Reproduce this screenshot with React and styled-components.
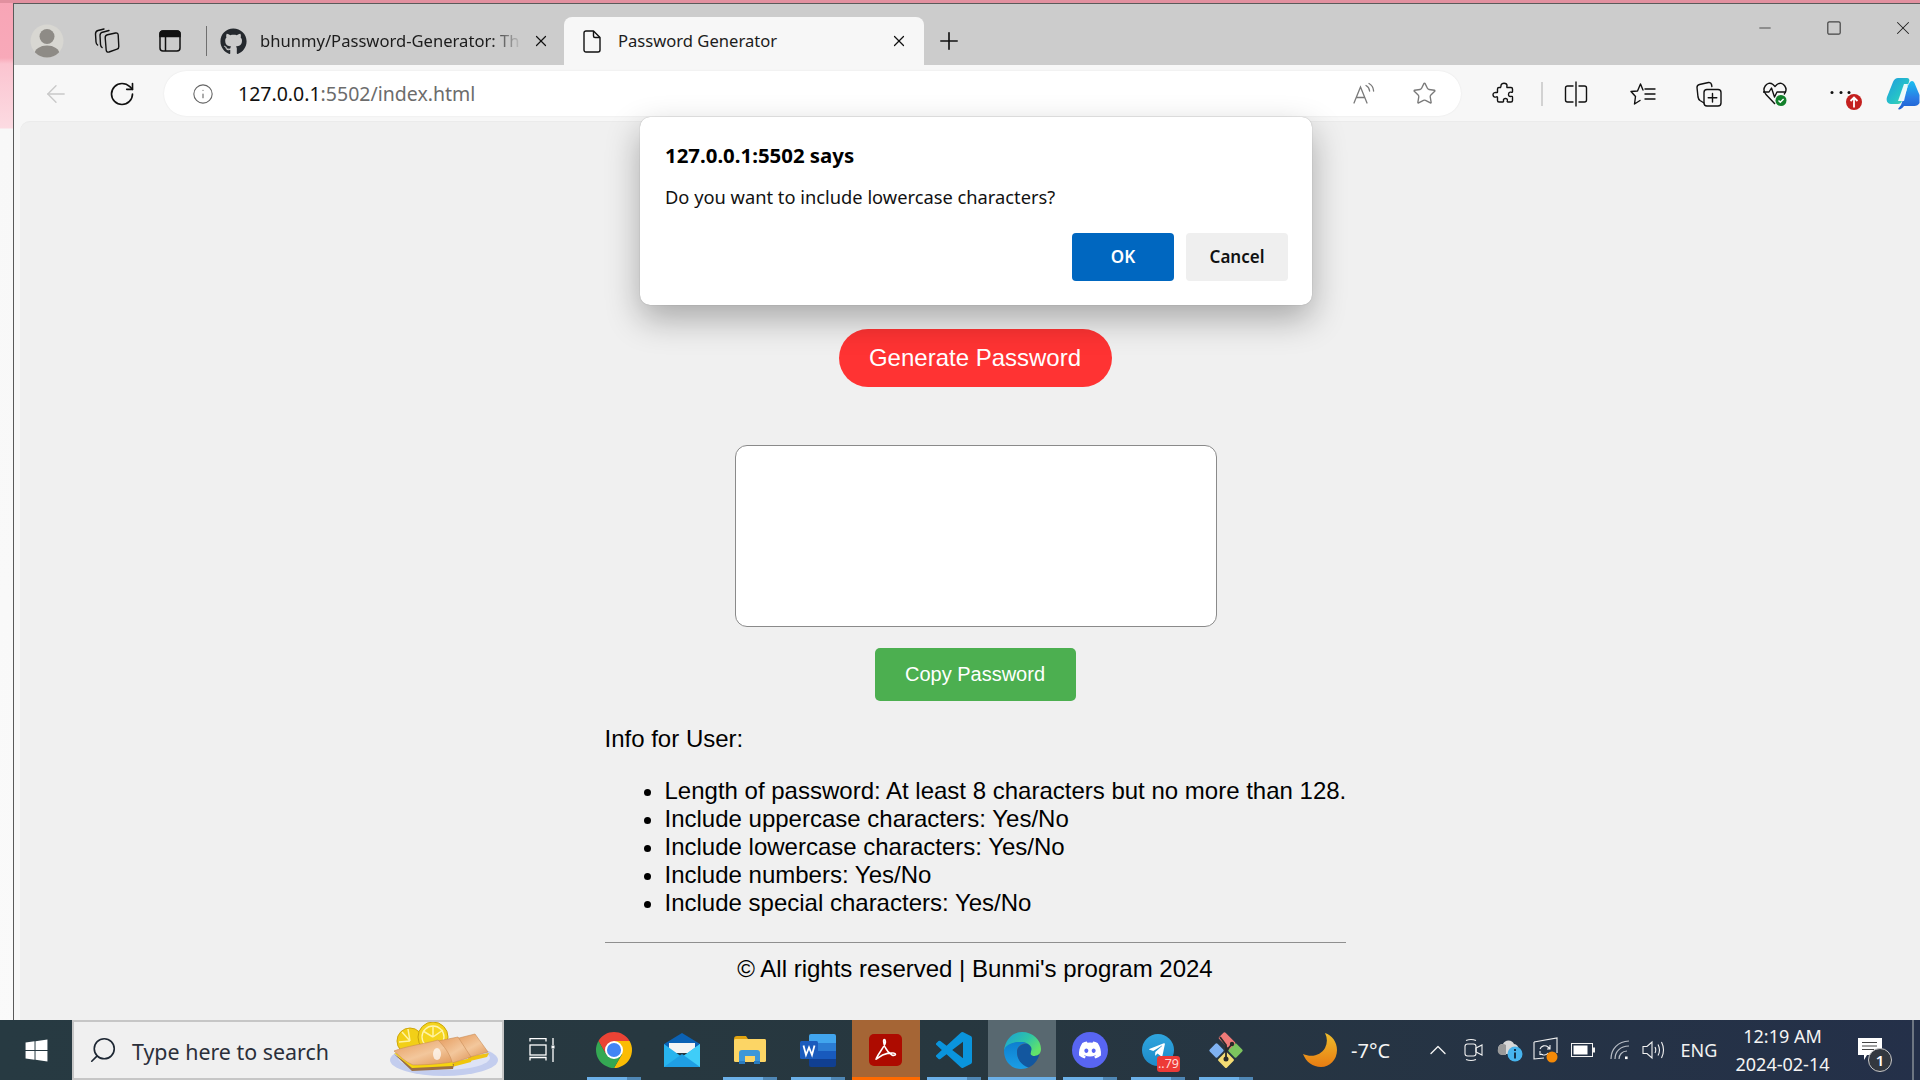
import React from 'react';
import styled, { createGlobalStyle } from 'styled-components';
import { ArrowLeft, RotateCw, Info, Star, X, Plus, Minus, ChevronUp, Search } from 'lucide-react';
import { FaGithub, FaDiscord, FaTelegramPlane, FaWindows } from 'react-icons/fa';

const UI_FONT = `"Noto Sans", "Open Sans", sans-serif`;

const GlobalStyle = createGlobalStyle`
  html, body {
    margin: 0;
    padding: 0;
    width: 1920px;
    height: 1080px;
    overflow: hidden;
  }
  * { box-sizing: border-box; }
`;

const Desktop = styled.div`
  position: relative;
  width: 1920px;
  height: 1080px;
  overflow: hidden;
  display: flex;
  flex-direction: column;
  padding-top: 3px;
  background:
    linear-gradient(to bottom, #e1909f 0, #e1909f 3px, transparent 3px),
    linear-gradient(to bottom, #f8a5b6 0, #f8a9b9 58px, #fbc4d0 64px, #fcdbe2 128px, #f8f8f8 129px, #fafafa 100%);
`;

const BrowserWindow = styled.div`
  flex: 1;
  min-height: 0;
  margin-left: 13px;
  border-left: 1px solid #5a5a5a;
  border-top: 1px solid #5a5a5a;
  display: flex;
  flex-direction: column;
  overflow: hidden;
`;

const TabStrip = styled.div`
  height: 61px;
  flex: none;
  background: #cccccc;
  padding-top: 13px;
  display: flex;
  align-items: stretch;
`;

const Slot = styled.div`
  width: ${(p) => p.$w}px;
  flex: none;
  display: flex;
  align-items: center;
  justify-content: center;
  margin-left: ${(p) => p.$ml || 0}px;
  color: ${(p) => p.$color || '#111'};
  position: relative;
`;

const TabDivider = styled.div`
  width: 1px;
  height: 30px;
  margin-top: 9px;
  background: #6f6f6f;
  flex: none;
`;

const InactiveTab = styled.div`
  width: 357px;
  flex: none;
  display: flex;
  align-items: center;
  padding-left: 13px;
  color: #222;
`;

const TabTitle = styled.div`
  font-family: ${UI_FONT};
  font-size: 16.6px;
  color: #1c1c1c;
  white-space: nowrap;
  margin-left: ${(p) => p.$ml}px;
  margin-bottom: 2px;
  width: ${(p) => p.$w}px;
  flex: none;
  ${(p) => p.$fade && `
    -webkit-mask-image: linear-gradient(to right, #000 88%, transparent 100%);
    mask-image: linear-gradient(to right, #000 88%, transparent 100%);
  `}
`;

const ActiveTab = styled.div`
  width: 360px;
  flex: none;
  display: flex;
  align-items: center;
  padding-left: 19px;
  background: #f7f7f7;
  border-radius: 8px 8px 0 0;
`;

const TabClose = styled.div`
  margin-left: ${(p) => p.$ml}px;
  display: flex;
  color: #111;
`;

const WindowControls = styled.div`
  margin-left: auto;
  display: flex;
  gap: 35px;
  padding-bottom: 26px;
`;

const Toolbar = styled.div`
  height: 56px;
  flex: none;
  background: #f7f7f7;
  display: flex;
  align-items: center;
  padding-top: 1px;
`;

const AddressBar = styled.div`
  width: 1297px;
  height: 45px;
  margin-left: 18px;
  flex: none;
  background: #fff;
  border-radius: 23px;
  display: flex;
  align-items: center;
  padding: 0 24px 0 28px;
  box-shadow: 0 0 2px rgba(0, 0, 0, 0.08);
`;

const UrlText = styled.div`
  font-family: ${UI_FONT};
  font-size: 19.5px;
  margin-left: 24px;
  margin-bottom: 1px;
  color: #6c6c6c;
  white-space: nowrap;
`;

const UrlHost = styled.span`
  color: #111;
`;

const AddressActions = styled.div`
  margin-left: auto;
  display: flex;
  align-items: center;
  gap: 36px;
  color: #7a7a7a;
`;

const ToolbarDivider = styled.div`
  width: 2px;
  height: 24px;
  margin-left: 13px;
  background: #d2d2d2;
  flex: none;
`;

const ToolbarGroup = styled.div`
  display: flex;
  align-items: center;
  margin-left: 19px;
`;

const Frame = styled.div`
  flex: 1;
  min-height: 0;
  background: #f7f7f7;
  padding-left: 6px;
`;

const Page = styled.main`
  height: 100%;
  background: #f0f0f0;
  border-radius: 10px 0 0 0;
  box-shadow: inset 0 1px 0 #ebebeb;
  padding: 208px 0 0 10px;
  display: flex;
  flex-direction: column;
  align-items: center;
  font-family: "Liberation Sans", Arial, sans-serif;
  color: #000;
`;

const GenerateButton = styled.button`
  width: 273px;
  height: 58px;
  border: 0;
  border-radius: 29px;
  background: #ff3333;
  color: #fff;
  font: 24px "Liberation Sans", Arial, sans-serif;
  flex: none;
`;

const PasswordBox = styled.div`
  width: 482px;
  height: 182px;
  margin: 58px 0 0 1px;
  background: #fff;
  border: 1px solid #8a8a8a;
  border-radius: 12px;
  flex: none;
`;

const CopyButton = styled.button`
  width: 201px;
  height: 53px;
  margin-top: 21px;
  border: 0;
  border-radius: 5px;
  background: #4caf50;
  color: #fff;
  font: 20px "Liberation Sans", Arial, sans-serif;
  flex: none;
`;

const InfoBlock = styled.section`
  width: 741px;
  margin-top: 24px;
  font-size: 24px;
  line-height: 28px;
`;

const InfoTitle = styled.div`
  margin-bottom: 24px;
`;

const InfoList = styled.ul`
  margin: 0;
  padding-left: 60px;

  li {
    white-space: nowrap;
  }
`;

const Rule = styled.hr`
  margin: 25px 0 12px;
  border: 0;
  border-top: 1px solid #8f8f8f;
  height: 1px;
`;

const Footer = styled.div`
  text-align: center;
`;

const Dialog = styled.div`
  position: absolute;
  left: 640px;
  top: 117px;
  width: 672px;
  height: 188px;
  background: #fff;
  border-radius: 10px;
  box-shadow: 0 0 1px rgba(0, 0, 0, 0.35), 0 14px 34px rgba(0, 0, 0, 0.3);
  padding: 25px 24px 24px 25px;
  display: flex;
  flex-direction: column;
  font-family: ${UI_FONT};
  color: #111;
`;

const DialogTitle = styled.div`
  font-size: 20.4px;
  font-weight: 700;
  line-height: 26px;
  color: #000;
`;

const DialogMessage = styled.div`
  font-size: 18.3px;
  line-height: 26px;
  margin-top: 16px;
`;

const DialogButtons = styled.div`
  margin-top: auto;
  display: flex;
  justify-content: flex-end;
  gap: 12px;
`;

const DialogButton = styled.button`
  width: 102px;
  height: 48px;
  border: 0;
  border-radius: 4px;
  padding: 0 0 2px;
  background: ${(p) => (p.$primary ? '#0067c0' : '#efefef')};
  color: ${(p) => (p.$primary ? '#fff' : '#111')};
  font: 600 17px ${UI_FONT};
`;

const Taskbar = styled.footer`
  height: 60px;
  flex: none;
  display: flex;
  align-items: stretch;
  background: linear-gradient(90deg, #273a42 0%, #27373f 50%, #243049 100%);
  color: #fff;
  font-family: ${UI_FONT};
  position: relative;
`;

const StartButton = styled.div`
  width: 72px;
  flex: none;
  display: flex;
  align-items: center;
  justify-content: center;
  color: #fff;
`;

const SearchBox = styled.div`
  width: 432px;
  flex: none;
  background: #f0f0f0;
  border: 2px solid #c6c6c6;
  display: flex;
  align-items: center;
  padding-left: 14px;
  color: #1d2733;
`;

const SearchGlass = styled(Search)`
  transform: scaleX(-1);
  flex: none;
`;

const SearchText = styled.div`
  margin: 3px 0 0 14px;
  font-size: 21.4px;
  color: #2b2f3a;
  white-space: nowrap;
`;

const SearchArt = styled.svg`
  margin-left: auto;
  margin-right: 2px;
  flex: none;
`;

const TaskItem = styled.div`
  width: ${(p) => p.$w || 68}px;
  flex: none;
  position: relative;
  display: flex;
  align-items: center;
  justify-content: center;
  background: ${(p) => (p.$active ? '#a56535' : p.$hover ? '#586870' : 'transparent')};
`;

const RunningBar = styled.div`
  position: absolute;
  left: ${(p) => (p.$full ? 0 : 7)}px;
  right: ${(p) => (p.$full ? 0 : 7)}px;
  bottom: 0;
  height: 3px;
  background: ${(p) => (p.$orange ? '#ff6a00' : p.$full ? '#6bb0e8' : 'linear-gradient(90deg, #6bb0e8 75%, #4f87b5 75%)')};
`;

const CountBadge = styled.div`
  position: absolute;
  left: 33px;
  top: 36px;
  width: 23px;
  height: 16px;
  border-radius: 3px;
  background: #ed3a36;
  color: #ffd9d6;
  font-size: 12.5px;
  line-height: 16px;
  text-align: center;
`;

const Weather = styled.div`
  margin-left: 43px;
  width: 117px;
  flex: none;
  display: flex;
  align-items: center;
`;

const Temperature = styled.div`
  margin-left: 14px;
  font-size: 20px;
  white-space: nowrap;
  color: #f4f4f4;
`;

const TrayItem = styled.div`
  width: ${(p) => p.$w}px;
  flex: none;
  display: flex;
  align-items: center;
  justify-content: center;
  color: #f2f2f2;
  font-size: 18px;
  position: relative;
`;

const Clock = styled.div`
  width: 111px;
  flex: none;
  display: flex;
  flex-direction: column;
  align-items: center;
  justify-content: center;
  font-size: 18px;
  line-height: 28px;
  color: #f4f4f4;
  white-space: nowrap;
`;

const NoticeCount = styled.div`
  position: absolute;
  left: 30px;
  top: 28px;
  width: 24px;
  height: 24px;
  border-radius: 50%;
  background: #33383f;
  border: 1px solid #c8c8c8;
  color: #fff;
  font-size: 15px;
  font-weight: 600;
  line-height: 22px;
  text-align: center;
`;

const ShowDesktopLine = styled.div`
  width: 2px;
  margin-left: 10px;
  flex: none;
  background: #6d7682;
`;

const Avatar = () => (
  <svg width="34" height="34" viewBox="0 0 34 34">
    <defs>
      <clipPath id="avatar-clip"><circle cx="17" cy="17" r="16.5" /></clipPath>
    </defs>
    <circle cx="17" cy="17" r="16.5" fill="#d8d7d2" />
    <g clipPath="url(#avatar-clip)" fill="#8e8b86">
      <circle cx="17" cy="12.5" r="7.5" />
      <ellipse cx="17" cy="30" rx="12.5" ry="8.5" />
    </g>
  </svg>
);

const CollectionsIcon = () => (
  <svg width="26" height="26" viewBox="0 0 26 26" fill="none" stroke="#111" strokeWidth="1.4" strokeLinecap="round" strokeLinejoin="round">
    <path d="M10 1 4 2.500Q1.500 3.300 1.500 6l.5 8q.2 2 1.600 3" />
    <path d="M15 2.500 8.500 4.200Q6 5 6 7.500l.5 9q.2 2 1.600 3" />
    <path d="M13.500 6.800 21.500 5q2.500-.4 2.700 2l.6 11.500q.1 2-1.700 2.600L15 24q-2.500.6-2.800-1.800l-1-12.500q-.1-2.300 2.300-2.900z" />
  </svg>
);

const VerticalTabsIcon = () => (
  <svg width="22" height="22" viewBox="0 0 22 22" fill="none" stroke="#111" strokeWidth="1.5">
    <rect x="1" y="1" width="20" height="20" rx="3" />
    <path d="M1 4a3 3 0 0 1 3-3h14a3 3 0 0 1 3 3v2.5H1z" fill="#111" />
    <path d="M6.5 6.5V21" />
  </svg>
);

const PageIcon = () => (
  <svg width="18" height="23" viewBox="0 0 18 23" fill="none" stroke="#111" strokeWidth="1.4" strokeLinejoin="round">
    <path d="M3 1h7.5L17 7.5V20a2 2 0 0 1-2 2H3a2 2 0 0 1-2-2V3a2 2 0 0 1 2-2z" />
    <path d="M10.5 1v5a1.5 1.5 0 0 0 1.5 1.5h5" />
  </svg>
);

const MaximizeIcon = () => (
  <svg width="14" height="14" viewBox="0 0 14 14" fill="none" stroke="#444" strokeWidth="1.2">
    <rect x="0.8" y="0.8" width="12.4" height="12.4" rx="1.5" />
  </svg>
);

const ReadAloudIcon = () => (
  <svg width="24" height="24" viewBox="0 0 24 24" fill="none" stroke="#7a7a7a" strokeWidth="1.3" strokeLinecap="round">
    <path d="M2 21 8.5 5 15 21M4.5 15.5h8" />
    <path d="M14 3.5c2 1 3.3 3 3.6 5.5M17 1.5c2.7 1.4 4.4 4.2 4.6 7.5" />
  </svg>
);

const ExtensionIcon = () => (
  <svg width="24" height="24" viewBox="0 0 24 24" fill="none" stroke="#111" strokeWidth="1.4" strokeLinejoin="round">
    <path d="M9 3.500C9 .500 15 .500 15 3.500c0 1-.500 1.500 0 2h4c1 0 1.500.500 1.500 1.500v2.500c0 .800-.700 1-1.500.700-2.800-1-3.800 5 0 4.200.800-.200 1.500 0 1.500.800v3.300c0 1-.600 1.500-1.500 1.500h-3c-.800 0-1-.700-.700-1.300 1-2.700-4.600-3.200-3.800 0 .200.800 0 1.300-.800 1.300H7c-1 0-1.500-.600-1.500-1.500v-3c0-.600-.500-.900-1-.600-3.800 1.300-5-4.200-1-4.500.700 0 2 .600 2-.500V7c0-1 .500-1.500 1.500-1.500h1.500c.500-.500.500-1 .500-2z" />
  </svg>
);

const SplitIcon = () => (
  <svg width="24" height="26" viewBox="0 0 24 26" fill="none" stroke="#111" strokeWidth="1.4" strokeLinecap="round">
    <path d="M9 5H3.500A2 2 0 0 0 1.500 7v12a2 2 0 0 0 2 2H9" />
    <path d="M15 5h5.500a2 2 0 0 1 2 2v12a2 2 0 0 1-2 2H15" />
    <path d="M12 1v24" />
  </svg>
);

const FavoritesIcon = () => (
  <svg width="26" height="24" viewBox="0 0 26 24" fill="none" stroke="#111" strokeWidth="1.4" strokeLinecap="round" strokeLinejoin="round">
    <path d="M13 8 10.500 2 7.500 9 1 9.500l4.500 5-1 7.500 5.500-3.500" />
    <path d="M15 7h10M15 12h10M15 17h10" />
  </svg>
);

const AddCollectionIcon = () => (
  <svg width="26" height="26" viewBox="0 0 26 26" fill="none" stroke="#111" strokeWidth="1.4" strokeLinecap="round" strokeLinejoin="round">
    <path d="M8 22 4 19.500Q2.500 18.500 2 16L1 6.500Q1 4 3.500 3.500l9-2Q15 1.200 15.500 3.500l.4 2" />
    <rect x="8" y="8.500" width="17" height="16.500" rx="3" />
    <path d="M16.500 12.500v8.500M12.200 16.800h8.600" />
  </svg>
);

const HealthIcon = () => (
  <svg width="26" height="28" viewBox="0 0 26 28" fill="none">
    <path d="M13 24 4 14.500C-1 9 5 0 11 4.500L13 6.500l2-2C21 0 27 9 22 14.500" stroke="#111" strokeWidth="1.4" strokeLinejoin="round" />
    <path d="M1 12h6l2.500-4 3 9 2.500-5h9" stroke="#111" strokeWidth="1.4" strokeLinejoin="round" fill="none" />
    <circle cx="19" cy="20.500" r="5.500" fill="#12802b" />
    <path d="m16.500 20.500 1.800 1.800 3.300-3.300" stroke="#fff" strokeWidth="1.400" />
  </svg>
);

const MoreIcon = () => (
  <svg width="44" height="33" viewBox="0 0 44 33">
    <circle cx="14" cy="15.500" r="1.500" fill="#111" />
    <circle cx="23" cy="15.500" r="1.500" fill="#111" />
    <circle cx="31" cy="15.500" r="1.500" fill="#111" />
    <circle cx="36" cy="25" r="8" fill="#c4201f" />
    <path d="M36 30.500v-10M32.500 24l3.500-3.500 3.500 3.500" stroke="#fff" strokeWidth="1.800" fill="none" />
  </svg>
);

const CopilotIcon = () => (
  <svg width="34" height="34" viewBox="0 0 34 34">
    <defs>
      <linearGradient id="copilot-a" x1="0" y1="0" x2="1" y2="1">
        <stop offset="0" stopColor="#1e9be0" />
        <stop offset="0.6" stopColor="#27c4c7" />
        <stop offset="1" stopColor="#58d69a" />
      </linearGradient>
      <linearGradient id="copilot-b" x1="0" y1="0" x2="0" y2="1">
        <stop offset="0" stopColor="#19c0f0" />
        <stop offset="0.6" stopColor="#2b7ce6" />
        <stop offset="1" stopColor="#1f5fd0" />
      </linearGradient>
    </defs>
    <path d="M12 1h9c2 0 3 2 2 4l-7 19c-.8 2-2 3-4 3H5C1 27 0 23 1 20L7 5c1-2.500 3-4 5-4z" fill="url(#copilot-a)" />
    <path d="M24 5c2-2 3.500-1 4.500 1l5 12v8c-1 2-3 3-5 3H18c-2 3-5 4-6 3l3-4 6-16c.5-2 1.500-5 3-7z" fill="url(#copilot-b)" />
    <path d="M22 7h-4L12 24h6z" fill="#fff" opacity="0.9" />
  </svg>
);

const LemonPlateArt = () => (
  <SearchArt width="112" height="56" viewBox="0 0 112 56">
    <defs>
      <linearGradient id="bread" x1="0" y1="0" x2="0.8" y2="1">
        <stop offset="0" stopColor="#e59a5c" />
        <stop offset="0.6" stopColor="#f3c79c" />
        <stop offset="1" stopColor="#e3a067" />
      </linearGradient>
    </defs>
    <ellipse cx="56" cy="38" rx="54" ry="16" fill="#c3cdee" />
    <ellipse cx="56" cy="36" rx="46" ry="12" fill="#dde3f6" />
    <circle cx="22" cy="19" r="13" fill="#f2cf17" stroke="#cfa70c" />
    <path d="M22 19 14 10M22 19l-2-12M22 19 11 20" stroke="#fff3a0" strokeWidth="1.500" />
    <circle cx="45" cy="15" r="15" fill="#f4d41d" stroke="#c9a40c" />
    <circle cx="45" cy="15" r="11" fill="none" stroke="#fff5ad" strokeWidth="1.300" />
    <path d="M45 15V4M45 15 35 9M45 15l10-7" stroke="#fff3a0" strokeWidth="1.500" />
    <path d="M70 24 84 34 101 31 99 35 82 39z" fill="#f0c414" />
    <path d="M67 17 87 12 100 30 82 35z" fill="url(#bread)" stroke="#c98d58" strokeWidth="0.600" />
    <path d="M54 28 64 40 84 36 83 40 64 45z" fill="#efc60d" />
    <path d="M50 19 70 15 83 35 64 41z" fill="url(#bread)" stroke="#c98d58" strokeWidth="0.600" />
    <path d="M6 32 24 49l41-2 1-5-42 2z" fill="#9b7044" />
    <path d="M6 31 24 46l41-2-1-5z" fill="#f6d50e" />
    <path d="M6 29C18 24 36 22 50 18c6 6 12 14 14 22-12 2-28 3-39 3C17 40 12 34 6 29z" fill="url(#bread)" stroke="#c98d58" strokeWidth="0.600" />
    <ellipse cx="49" cy="32" rx="4" ry="6" fill="#fff" opacity="0.7" />
  </SearchArt>
);

const TaskViewIcon = () => (
  <svg width="26" height="24" viewBox="0 0 26 24" fill="none" stroke="#fff" strokeWidth="1.300">
    <path d="M1 4V1.200h16V4M1 23v-3h16v3" transform="translate(0 -0.500)" />
    <rect x="1" y="7" width="16" height="10" />
    <path d="M24 0v7M24 11v13" />
    <rect x="22.500" y="7.500" width="3" height="3" fill="#fff" stroke="none" />
  </svg>
);

const ChromeIcon = () => {
  const sector = 'M22.39 6A12 12 0 0 0 1.61 6L6.800 15 12 12V6z';
  return (
    <svg width="36" height="36" viewBox="0 0 24 24">
      <path d={sector} fill="#ea4335" />
      <path d={sector} fill="#fbbc04" transform="rotate(120 12 12)" />
      <path d={sector} fill="#34a853" transform="rotate(240 12 12)" />
      <circle cx="12" cy="12" r="6" fill="#fff" />
      <circle cx="12" cy="12" r="4.700" fill="#4285f4" />
    </svg>
  );
};

const MailIcon = () => (
  <svg width="36" height="34" viewBox="0 0 36 34">
    <path d="M0 11 18 0l18 11v4H0z" fill="#0b62b5" />
    <path d="M5 10h26v10H5z" fill="#f4f4f4" />
    <path d="M0 11 18 24 36 11v23H0z" fill="#28b4ee" />
    <path d="M36 11v23H24l-6-10z" fill="#3fcdf8" />
    <path d="M0 34 18 21l18 13z" fill="#1f9fe4" />
  </svg>
);

const FolderIcon = () => (
  <svg width="32" height="28" viewBox="0 0 32 28">
    <path d="M0 3q0-3 3-3h9l2 3h16q2 0 2 2v4H0z" fill="#e0a310" />
    <rect y="3" width="32" height="23" rx="1.500" fill="#fcd565" />
    <path d="M5 26v-9q0-3 3-3h15q3 0 3 3v9h-5v-6H11v6z" fill="#3d97d8" />
    <rect x="5" y="25" width="6" height="3" fill="#2a7cc0" />
    <rect x="20" y="25" width="6" height="3" fill="#2a7cc0" />
  </svg>
);

const WordIcon = () => (
  <svg width="36" height="33" viewBox="0 0 36 33">
    <path d="M9 2q0-2 2-2h23q2 0 2 2v7H9z" fill="#41a5ee" />
    <rect x="9" y="9" width="27" height="8" fill="#2b7cd3" />
    <rect x="9" y="17" width="27" height="8" fill="#185abd" />
    <path d="M9 25h27v6q0 2-2 2H11q-2 0-2-2z" fill="#103f91" />
    <rect y="7" width="18" height="18" rx="1.500" fill="#1a5bbd" />
    <path d="M3.500 11.500 6 21l3-7.500L12 21l2.500-9.500" fill="none" stroke="#fff" strokeWidth="1.800" />
  </svg>
);

const AcrobatIcon = () => (
  <svg width="34" height="32" viewBox="0 0 34 32">
    <rect width="33" height="32" rx="5" fill="#ad0b00" />
    <path d="M7 25c2-5 6-9 9-15 .8-2 .3-4.500-.6-4.500-1.200 0-1 3.500.6 7.500 2 4 4.500 6.500 7 8 1.500.8 3.500.3 3.500-.8 0-1.200-3.500-1.700-8-.8-4 .8-7 2.500-9 4.200-1.300 1-2.800 2-2.500 1.400z" fill="none" stroke="#fff" strokeWidth="1.600" strokeLinejoin="round" />
  </svg>
);

const VsCodeIcon = () => (
  <svg width="36" height="36" viewBox="0 0 24 24">
    <path
      fill="#0a94dc"
      d="M23.15 2.587 18.21.21a1.494 1.494 0 0 0-1.705.29l-9.46 8.63-4.12-3.128a.999.999 0 0 0-1.276.057L.327 7.261A1 1 0 0 0 .326 8.74L3.899 12 .326 15.26a1 1 0 0 0 .001 1.479L1.65 17.94a.999.999 0 0 0 1.276.057l4.12-3.128 9.46 8.63a1.492 1.492 0 0 0 1.704.29l4.942-2.377A1.500 1.500 0 0 0 24 20.060V3.939a1.500 1.500 0 0 0-.85-1.352zm-5.146 14.861L10.826 12l7.178-5.448v10.896z"
    />
  </svg>
);

const EdgeIcon = () => (
  <svg width="37" height="37" viewBox="0 0 37 37">
    <defs>
      <linearGradient id="edge-a" x1="0" y1="0" x2="1" y2="0.600">
        <stop offset="0" stopColor="#1a9fd9" />
        <stop offset="0.6" stopColor="#2fc5a6" />
        <stop offset="1" stopColor="#62e36a" />
      </linearGradient>
      <linearGradient id="edge-b" x1="0" y1="0" x2="0" y2="1">
        <stop offset="0" stopColor="#0d7fd0" />
        <stop offset="1" stopColor="#1b9ee6" />
      </linearGradient>
    </defs>
    <path d="M18 0c11 0 19 8 19 17 0 4-2.500 7-6.500 7-3 0-5-1-4-3 2-4-2-11-9-11C9 10 2 13 0 19 1 8 8 0 18 0z" fill="url(#edge-a)" />
    <path d="M0 19c1-6 8-9 17-9 3 0 5 .6 7 2-6-2-11 2-11 8 0 7 5 13 12 15-2 1-5 2-8 2C7 37 0 29 0 19z" fill="url(#edge-b)" />
    <path d="M13 20c0-5 5-9 11-8 2 1 3.500 3 3.500 5 0 1.500-1 3-1 4.500 0 2 2.500 2.500 4 2.500 2 0 4-.8 5-2-1.500 7-7 12-11 13.500C17 33 13 27 13 20z" fill="#13579f" />
  </svg>
);

const DiscordIcon = () => (
  <svg width="36" height="36" viewBox="0 0 36 36">
    <circle cx="18" cy="18" r="18" fill="#5865f2" />
    <FaDiscord x="6" y="6" size="24" color="#fff" />
  </svg>
);

const TelegramIcon = () => (
  <svg width="32" height="32" viewBox="0 0 32 32">
    <defs>
      <linearGradient id="tg" x1="0" y1="0" x2="0" y2="1">
        <stop offset="0" stopColor="#2fa5de" />
        <stop offset="1" stopColor="#1e8bc9" />
      </linearGradient>
    </defs>
    <circle cx="16" cy="16" r="16" fill="url(#tg)" />
    <FaTelegramPlane x="6" y="7" size="18" color="#fff" />
  </svg>
);

const GitIcon = () => (
  <svg width="36" height="36" viewBox="0 0 36 36">
    <rect x="3" y="13" width="11" height="11" rx="1.500" fill="#7fb2f2" transform="rotate(45 8.500 18.500)" />
    <rect x="22" y="13" width="11" height="11" rx="1.500" fill="#7cc45e" transform="rotate(45 27.500 18.500)" />
    <rect x="12" y="22" width="12" height="12" rx="1.500" fill="#f4dc74" transform="rotate(45 18 28)" />
    <rect x="11" y="4" width="16" height="9" rx="1.500" fill="#ef7a78" transform="rotate(45 19 8.500)" />
    <path d="M12 5 18 13V26M24 12l-6 7" stroke="#2a2a2a" strokeWidth="1.800" fill="none" />
    <circle cx="18" cy="27" r="2.500" fill="#2a2a2a" />
    <circle cx="24" cy="12" r="2.200" fill="#2a2a2a" />
  </svg>
);

const MoonIcon = () => (
  <svg width="34" height="34" viewBox="0 0 34 34">
    <defs>
      <linearGradient id="moon" x1="0" y1="0" x2="0" y2="1">
        <stop offset="0" stopColor="#eebd2c" />
        <stop offset="1" stopColor="#e87c12" />
      </linearGradient>
    </defs>
    <path d="M22 0c7 2 12 9 12 17 0 10-7.500 17-16 17C10 34 3 29 0 21c9 4 18 1 22-6 2.500-5 2.500-10 0-15z" fill="url(#moon)" />
  </svg>
);

const MeetIcon = () => (
  <svg width="20" height="24" viewBox="0 0 20 24" fill="none" stroke="#f2f2f2" strokeWidth="1.100">
    <rect x="1" y="6" width="11" height="12" rx="2.500" />
    <path d="m12 10 6-3v10l-6-3z" />
    <path d="M2 2.500Q7 .500 12 2.500M2 21.500q5 2 10 0" />
  </svg>
);

const CloudIcon = () => (
  <svg width="26" height="24" viewBox="0 0 26 24">
    <path d="M3 15a5 5 0 0 1 3-9 6 6 0 0 1 11 0 5 5 0 0 1-1 10H5z" fill="#d8d8d8" />
    <path d="M1 11a5 5 0 0 0 3 6h5V7a5 5 0 0 0-8 4z" fill="#9a9a9a" />
    <circle cx="18" cy="16" r="7.500" fill="#47b4ee" />
    <rect x="17" y="14.500" width="2" height="6" fill="#16324a" />
    <rect x="17" y="11" width="2" height="2" fill="#16324a" />
  </svg>
);

const SyncIcon = () => (
  <svg width="26" height="26" viewBox="0 0 26 26" fill="none" stroke="#f2f2f2" strokeWidth="1.100">
    <path d="M1 5 24 1v15M1 5v17l10-1" />
    <path d="M7 12a5 5 0 0 1 8-2l2 2M17 8v4h-3M15 16a5 5 0 0 1-7 1M7 14v3.500h3" />
    <circle cx="19" cy="20" r="5.500" fill="#f58a07" stroke="none" />
  </svg>
);

const BatteryIcon = () => (
  <svg width="24" height="14" viewBox="0 0 24 14">
    <rect x="0.500" y="0.500" width="21" height="13" fill="none" stroke="#f2f2f2" />
    <rect x="2.500" y="2.500" width="14" height="9" fill="#fff" />
    <rect x="22" y="4.500" width="2" height="5" fill="#f2f2f2" />
  </svg>
);

const WifiIcon = () => (
  <svg width="20" height="20" viewBox="0 0 20 20" fill="none" stroke="#b9bec6" strokeWidth="1.200">
    <path d="M1 19C1 9 8 1.500 19 1" />
    <path d="M5 19c0-7 5-13 14-13" />
    <path d="M9 19c0-4 3-8 8-8" />
    <rect x="15" y="16.500" width="2.600" height="2.600" fill="#fff" stroke="none" />
  </svg>
);

const VolumeIcon = () => (
  <svg width="24" height="22" viewBox="0 0 24 22" fill="none" stroke="#f2f2f2" strokeWidth="1.100">
    <path d="M1 7.500h4L10 3v16l-5-4.500H1z" />
    <path d="M13 8q1.500 3 0 6M16 5.500q3 5.500 0 11M19.500 3q4 8 0 16" />
  </svg>
);

const NoticeIcon = () => (
  <svg width="24" height="24" viewBox="0 0 24 24">
    <path d="M0 0h24v17H9l-3 5v-5H0z" fill="#fff" />
    <path d="M4 4.500h15M4 8h15M4 11.500h12" stroke="#444" strokeWidth="1" />
  </svg>
);

const infoItems = [
  'Length of password: At least 8 characters but no more than 128.',
  'Include uppercase characters: Yes/No',
  'Include lowercase characters: Yes/No',
  'Include numbers: Yes/No',
  'Include special characters: Yes/No',
];

const App = () => {
  return (
    <Desktop>
      <GlobalStyle />
      <BrowserWindow>
        <TabStrip>
          <Slot $w={66}><Avatar /></Slot>
          <Slot $w={54}><CollectionsIcon /></Slot>
          <Slot $w={72}><VerticalTabsIcon /></Slot>
          <TabDivider />
          <InactiveTab>
            <FaGithub size={27} color="#25292e" />
            <TabTitle $ml={13} $w={262} $fade>bhunmy/Password-Generator: Th</TabTitle>
            <TabClose $ml={10}><X size={18} strokeWidth={1.6} /></TabClose>
          </InactiveTab>
          <ActiveTab>
            <PageIcon />
            <TabTitle $ml={17} $w={263}>Password Generator</TabTitle>
            <TabClose $ml={9}><X size={18} strokeWidth={1.6} /></TabClose>
          </ActiveTab>
          <Slot $w={50}><Plus size={28} strokeWidth={1.4} /></Slot>
          <WindowControls>
            <Slot $w={34} $color="#333"><Minus size={18} strokeWidth={1.1} /></Slot>
            <Slot $w={34}><MaximizeIcon /></Slot>
            <Slot $w={34} $color="#222"><X size={22} strokeWidth={1.1} /></Slot>
          </WindowControls>
        </TabStrip>
        <Toolbar>
          <Slot $w={84} $color="#c9c9c9"><ArrowLeft size={28} strokeWidth={1.2} /></Slot>
          <Slot $w={48}><RotateCw size={28} strokeWidth={1.4} /></Slot>
          <AddressBar>
            <Slot $w={22} $color="#666"><Info size={26} strokeWidth={1.2} /></Slot>
            <UrlText><UrlHost>127.0.0.1</UrlHost>:5502/index.html</UrlText>
            <AddressActions>
              <ReadAloudIcon />
              <Star size={25} strokeWidth={1.3} />
            </AddressActions>
          </AddressBar>
          <ToolbarGroup>
            <Slot $w={48}><ExtensionIcon /></Slot>
            <ToolbarDivider />
            <Slot $w={66}><SplitIcon /></Slot>
            <Slot $w={68}><FavoritesIcon /></Slot>
            <Slot $w={64}><AddCollectionIcon /></Slot>
            <Slot $w={68}><HealthIcon /></Slot>
            <Slot $w={62}><MoreIcon /></Slot>
            <Slot $w={34} $ml={15}><CopilotIcon /></Slot>
          </ToolbarGroup>
        </Toolbar>
        <Frame>
          <Page>
            <GenerateButton>Generate Password</GenerateButton>
            <PasswordBox />
            <CopyButton>Copy Password</CopyButton>
            <InfoBlock>
              <InfoTitle>Info for User:</InfoTitle>
              <InfoList>
                {infoItems.map((item) => (
                  <li key={item}>{item}</li>
                ))}
              </InfoList>
              <Rule />
              <Footer>© All rights reserved | Bunmi's program 2024</Footer>
            </InfoBlock>
          </Page>
        </Frame>
      </BrowserWindow>
      <Dialog>
        <DialogTitle>127.0.0.1:5502 says</DialogTitle>
        <DialogMessage>Do you want to include lowercase characters?</DialogMessage>
        <DialogButtons>
          <DialogButton $primary>OK</DialogButton>
          <DialogButton>Cancel</DialogButton>
        </DialogButtons>
      </Dialog>
      <Taskbar>
        <StartButton><FaWindows size={25} /></StartButton>
        <SearchBox>
          <SearchGlass size={30} strokeWidth={1.3} />
          <SearchText>Type here to search</SearchText>
          <LemonPlateArt />
        </SearchBox>
        <TaskItem $w={76}><TaskViewIcon /></TaskItem>
        <TaskItem><ChromeIcon /><RunningBar /></TaskItem>
        <TaskItem><MailIcon /></TaskItem>
        <TaskItem><FolderIcon /><RunningBar /></TaskItem>
        <TaskItem><WordIcon /><RunningBar /></TaskItem>
        <TaskItem $active><AcrobatIcon /><RunningBar $full $orange /></TaskItem>
        <TaskItem><VsCodeIcon /><RunningBar /></TaskItem>
        <TaskItem $hover><EdgeIcon /><RunningBar $full /></TaskItem>
        <TaskItem><DiscordIcon /><RunningBar /></TaskItem>
        <TaskItem><TelegramIcon /><CountBadge>..79</CountBadge><RunningBar /></TaskItem>
        <TaskItem><GitIcon /><RunningBar /></TaskItem>
        <Weather>
          <MoonIcon />
          <Temperature>-7°C</Temperature>
        </Weather>
        <TrayItem $w={36}><ChevronUp size={28} strokeWidth={1.2} /></TrayItem>
        <TrayItem $w={36}><MeetIcon /></TrayItem>
        <TrayItem $w={36}><CloudIcon /></TrayItem>
        <TrayItem $w={36}><SyncIcon /></TrayItem>
        <TrayItem $w={38}><BatteryIcon /></TrayItem>
        <TrayItem $w={35}><WifiIcon /></TrayItem>
        <TrayItem $w={34}><VolumeIcon /></TrayItem>
        <TrayItem $w={56}>ENG</TrayItem>
        <Clock>
          <div>12:19 AM</div>
          <div>2024-02-14</div>
        </Clock>
        <TrayItem $w={64}>
          <NoticeIcon />
          <NoticeCount>1</NoticeCount>
        </TrayItem>
        <ShowDesktopLine />
      </Taskbar>
    </Desktop>
  );
};

export default App;
